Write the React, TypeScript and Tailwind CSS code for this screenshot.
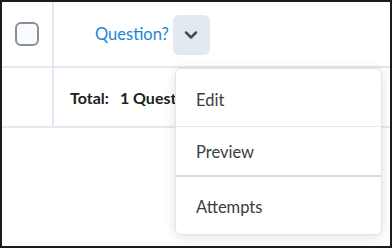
import { ChevronDown } from "lucide-react";

const menuItems = [
  { label: "Edit", height: "h-[58px] pt-[6px]", border: "border-b border-[#e3e9f1]" },
  { label: "Preview", height: "h-[50px] pt-[3px]", border: "border-b-2 border-[#d8dee6]" },
  { label: "Attempts", height: "h-[57px] pt-[3px]", border: "" },
];

export default function App() {
  return (
    <div className="relative h-[248px] w-[392px] overflow-hidden border-2 border-[#1b1b1b] bg-white font-['Lato',sans-serif]">
      {/* table */}
      <div className="grid grid-cols-[52px_1fr] grid-rows-[66px_60px]">
        <div className="flex items-center justify-center border-r-2 border-b-2 border-[#e3e9f1]">
          <div className="h-[24px] w-[24px] rounded-[6px] border-2 border-[#8a8f95] bg-[#f9fbff]" />
        </div>
        <div className="flex items-center border-b-2 border-[#e3e9f1] pl-[41px]">
          <span className="text-[16.5px] text-[#1a85d6]">Question?</span>
          <button className="ml-[4px] mt-[1px] flex h-[40px] w-[37px] items-center justify-center rounded-[6px] bg-[#e3e9f1] text-[#494c4e]">
            <ChevronDown size={20} strokeWidth={3} />
          </button>
        </div>
        <div className="border-r-2 border-b-2 border-[#e3e9f1]" />
        <div className="flex items-center border-b-2 border-[#e3e9f1] pl-[16px] pt-[2px]">
          <span className="whitespace-nowrap text-[16px] font-bold text-[#202122]">
            Total:<span className="ml-[11px]">1 Questions</span>
          </span>
        </div>
      </div>

      {/* dropdown menu */}
      <div className="absolute left-[173px] top-[66px] w-[207px] rounded-[6px] border border-[#dfe5ec] bg-white shadow-[0_2px_12px_rgba(0,0,0,0.12)]">
        {menuItems.map((item) => (
          <div key={item.label} className={`flex items-center pl-[20px] ${item.height} ${item.border}`}>
            <span className="text-[16.5px] text-[#3a3d40]">{item.label}</span>
          </div>
        ))}
      </div>
    </div>
  );
}
